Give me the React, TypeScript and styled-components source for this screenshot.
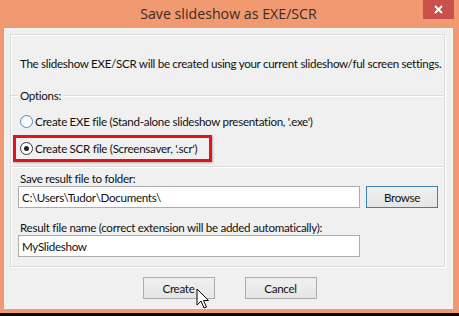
import React from "react";
import styled, { createGlobalStyle } from "styled-components";

const Global = createGlobalStyle`
  html, body { margin: 0; padding: 0; background: #0a0a0a; }
  body { font-family: "Lato", "Noto Sans", sans-serif; }
`;

const Window = styled.div`
  width: 459px;
  height: 313px;
  box-sizing: border-box;
  background: #f19a72;
  display: flex;
  flex-direction: column;
  padding: 0 6px 4px 4px;
`;

const TitleBar = styled.div`
  height: 28px;
  position: relative;
  display: flex;
  align-items: center;
  justify-content: center;
  font-size: 14.2px;
  color: #3b2a22;
  font-family: "Open Sans", "Noto Sans", sans-serif;
  padding-bottom: 1px;
  box-sizing: border-box;
`;

const CloseButton = styled.div`
  position: absolute;
  top: 0;
  right: -1px;
  width: 31px;
  height: 19px;
  background: #c9504b;
  display: flex;
  align-items: center;
  justify-content: center;
`;

const Client = styled.div`
  flex: 1;
  background: #f0f0f0;
  border: 1px solid #f6f6f6;
  display: flex;
  flex-direction: column;
  padding: 5px 7px 0 5px;
  font-size: 11.6px;
  letter-spacing: -0.3px;
  color: #111;
`;

const Group = styled.div`
  border: 1px solid #dcdcdc;
  box-shadow: inset 1px 1px 0 #ffffff, 1px 1px 0 #ffffff;
  height: 233px;
  box-sizing: border-box;
  display: flex;
  flex-direction: column;
`;

const Text = styled.div<{ $top?: number; $lh?: number }>`
  margin-top: ${(p) => p.$top ?? 0}px;
  line-height: ${(p) => p.$lh ?? 15}px;
  padding-left: 9px;
  white-space: nowrap;
`;

const CaptionRow = styled.div<{ $top: number }>`
  margin-top: ${(p) => p.$top}px;
  display: flex;
  align-items: center;
  height: 15px;
  gap: 2px;
`;

const Rule = styled.div<{ $w?: number }>`
  height: 1px;
  background: #dcdcdc;
  box-shadow: 0 1px 0 #ffffff;
  ${(p) => (p.$w ? `width: ${p.$w}px;` : "flex: 1;")}
`;

const BottomRule = styled.div<{ $top: number }>`
  margin-top: ${(p) => p.$top}px;
  height: 1px;
  background: #dcdcdc;
  box-shadow: 0 1px 0 #ffffff;
`;

const RadioRow = styled.div<{ $top: number }>`
  margin-top: ${(p) => p.$top}px;
  display: flex;
  align-items: center;
  gap: 2px;
  height: 15px;
  white-space: nowrap;
`;

const RadioCircle = styled.span<{ $checked?: boolean }>`
  width: 13px;
  height: 13px;
  box-sizing: border-box;
  border-radius: 50%;
  border: 1px solid ${(p) => (p.$checked ? "#333" : "#3c8fd8")};
  background: ${(p) => (p.$checked ? "#fff" : "linear-gradient(#f4faff, #ffffff)")};
  display: flex;
  align-items: center;
  justify-content: center;
  flex-shrink: 0;
  &::after {
    content: "";
    width: 5px;
    height: 5px;
    border-radius: 50%;
    background: ${(p) => (p.$checked ? "#222" : "transparent")};
  }
`;

const Options = styled.div`
  padding-left: 9px;
  display: flex;
  flex-direction: column;
`;

const Highlight = styled.div`
  margin-top: 6px;
  margin-left: -7px;
  width: 199px;
  height: 27px;
  box-sizing: border-box;
  border: 3px solid #e1141c;
  box-shadow: 1px 1px 2px rgba(0, 0, 0, 0.25);
  display: flex;
  align-items: center;
  padding-left: 4px;
`;

const Fields = styled.div`
  padding-left: 7px;
  display: flex;
  flex-direction: column;
`;

const Label = styled.div<{ $top: number }>`
  margin-top: ${(p) => p.$top}px;
  line-height: 14px;
  padding-left: 2px;
  white-space: nowrap;
`;

const FieldRow = styled.div`
  display: flex;
  align-items: center;
  gap: 6px;
`;

const Input = styled.div`
  width: 342px;
  height: 22px;
  box-sizing: border-box;
  border: 1px solid #acacac;
  background: #fff;
  display: flex;
  align-items: center;
  padding-left: 3px;
  white-space: nowrap;
`;

const Button = styled.div<{ $focused?: boolean }>`
  width: 72px;
  height: 22px;
  box-sizing: border-box;
  border: 1px solid ${(p) => (p.$focused ? "#3c7fb1" : "#acacac")};
  background: linear-gradient(#f0f0f0, #e5e5e5);
  display: flex;
  align-items: center;
  justify-content: center;
  position: relative;
`;

const ButtonBar = styled.div`
  display: flex;
  justify-content: center;
  gap: 30px;
  margin-top: 10px;
  padding-left: 4px;
`;

const Cursor = styled.svg`
  position: absolute;
  left: 52px;
  top: 10px;
`;

export default function App() {
  return (
    <>
      <Global />
      <Window>
        <TitleBar>
          Save slideshow as EXE/SCR
          <CloseButton>
            <svg width="9" height="9" viewBox="0 0 9 9">
              <path d="M1 1 L8 8 M8 1 L1 8" stroke="#fff" strokeWidth="1.8" />
            </svg>
          </CloseButton>
        </TitleBar>
        <Client>
          <Group>
            <Text $top={21}>
              The slideshow EXE/SCR will be created using your current slideshow/ful screen settings.
            </Text>
            <CaptionRow $top={17}>
              <Rule $w={7} />
              <span>Options:</span>
              <Rule />
            </CaptionRow>
            <Options>
              <RadioRow $top={11}>
                <RadioCircle />
                Create EXE file (Stand-alone slideshow presentation, '.exe')
              </RadioRow>
              <Highlight>
                <RadioRow $top={0}>
                  <RadioCircle $checked />
                  Create SCR file (Screensaver, '.scr')
                </RadioRow>
              </Highlight>
            </Options>
            <BottomRule $top={4} />
            <Fields>
              <Label $top={5}>Save result file to folder:</Label>
              <FieldRow>
                <Input>C:\Users\Tudor\Documents\</Input>
                <Button $focused>Browse</Button>
              </FieldRow>
              <Label $top={13}>Result file name (correct extension will be added automatically):</Label>
              <FieldRow>
                <Input>MySlideshow</Input>
              </FieldRow>
            </Fields>
          </Group>
          <ButtonBar>
            <Button>
              Create
              <Cursor width="14" height="22" viewBox="0 0 14 22">
                <path
                  d="M1 1 L1 17 L5 13 L8 20 L10.5 19 L7.5 12.5 L12.5 12.5 Z"
                  fill="#fff"
                  stroke="#000"
                  strokeWidth="1"
                  strokeLinejoin="round"
                />
              </Cursor>
            </Button>
            <Button>Cancel</Button>
          </ButtonBar>
        </Client>
      </Window>
    </>
  );
}
